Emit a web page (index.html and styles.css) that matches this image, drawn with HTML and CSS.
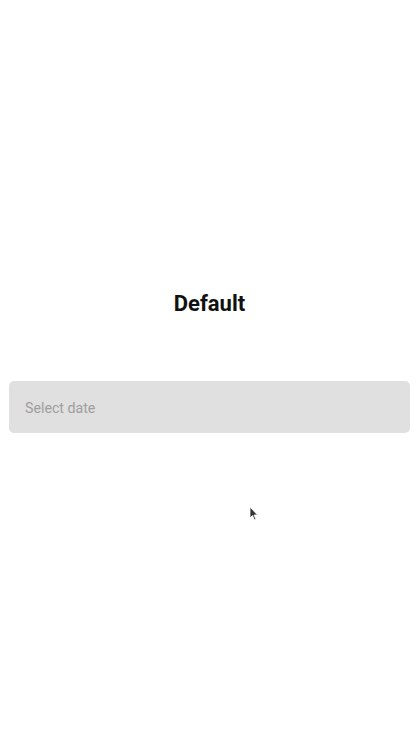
FILE: index.html
```html
<!DOCTYPE html>
<html>
<head>
<meta charset="utf-8">
<link rel="stylesheet" href="styles.css">
</head>
<body>
<main class="page">
  <h1 class="title">Default</h1>
  <div class="field">
    <span class="placeholder">Select date</span>
  </div>
</main>
<svg class="cursor" width="10" height="16" viewBox="0 0 10 16"><path d="M1 1 L1 12 L3.5 9.5 L5.5 14 L7 13.3 L5 9 L8.5 9 Z" fill="#333" stroke="#fff" stroke-width="0.8"/></svg>
</body>
</html>
```
FILE: styles.css
```css
html, body {
  margin: 0;
  padding: 0;
  background: #fff;
  font-family: Roboto, "Noto Sans", sans-serif;
}
.page {
  display: flex;
  flex-direction: column;
  padding: 291px 10px 0 9px;
}
.title {
  margin: 0;
  text-align: center;
  font-size: 22px;
  line-height: 26px;
  font-weight: 700;
  color: #111;
}
.field {
  margin-top: 64px;
  height: 52px;
  background: #e0e0e0;
  border-radius: 5px;
  display: flex;
  align-items: center;
  padding: 1px 16px 0;
  box-sizing: border-box;
}
.placeholder {
  font-size: 14.2px;
  color: #9e9e9e;
}
.cursor {
  position: absolute;
  left: 249px;
  top: 506px;
}
```
